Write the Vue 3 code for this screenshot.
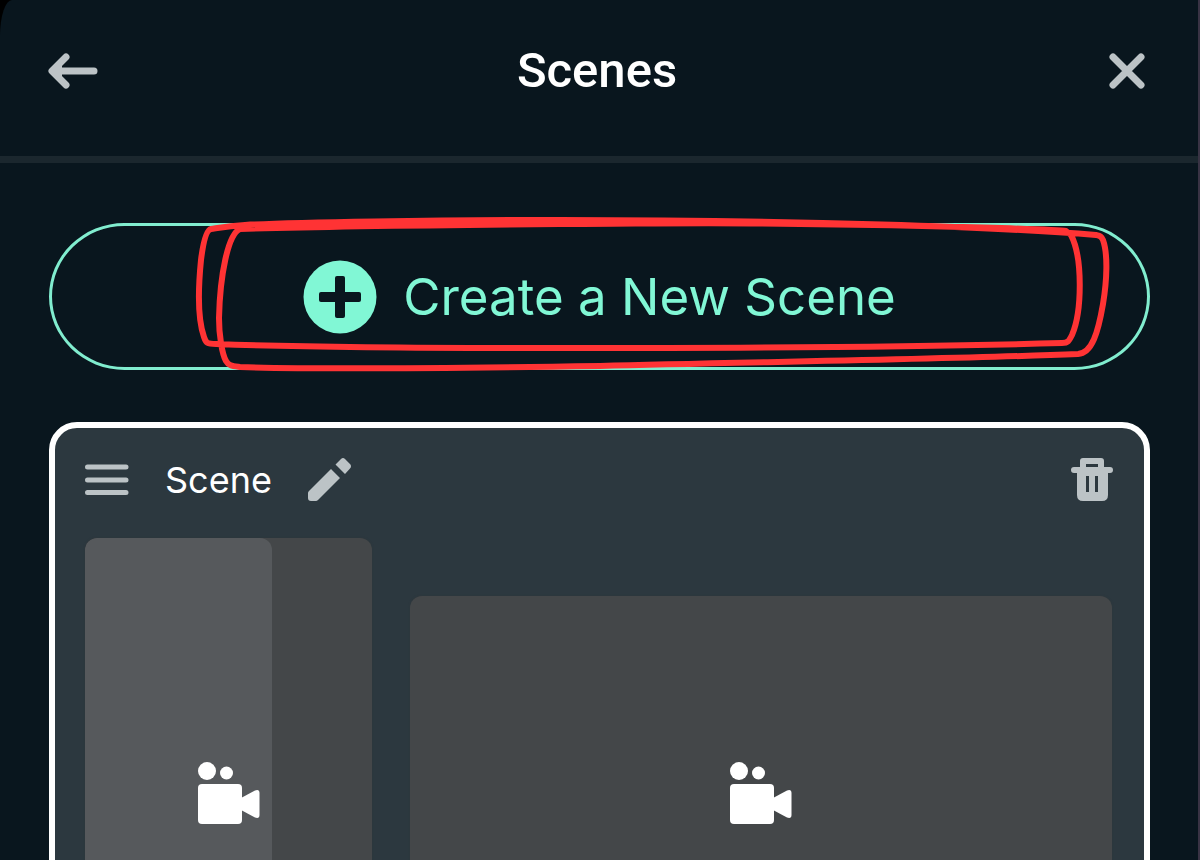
<script setup>
import { ref } from "vue";

const sceneName = ref("Scene");

// one preview per output orientation
const previews = [
  { id: "portrait", selected: true },
  { id: "landscape", selected: false },
];
</script>

<template>
  <div class="screen">
    <header class="top-bar">
      <button class="icon-button" type="button" aria-label="Back">
        <svg width="50" height="38" viewBox="0 0 50 38">
          <path d="M18 5 L4 19 L18 33 M6 19 H46" />
          <path d="M4 19 L14 9 V29 Z" class="solid" />
        </svg>
      </button>
      <h1>Scenes</h1>
      <button class="icon-button close" type="button" aria-label="Close">
        <svg width="38" height="38" viewBox="0 0 38 38">
          <path d="M5 5 L33 33 M33 5 L5 33" />
        </svg>
      </button>
    </header>

    <main class="content">
      <div class="create-wrap">
        <button class="create" type="button">
          <svg width="74" height="74" viewBox="0 0 74 74" aria-hidden="true">
            <circle cx="37" cy="37" r="36.500" fill="#81f7d5" />
            <rect x="16" y="32" width="42" height="10" rx="2" fill="#09161e" />
            <rect x="32" y="16" width="10" height="42" rx="2" fill="#09161e" />
          </svg>
          <span>Create a New Scene</span>
        </button>
        <!-- hand drawn marker around the button -->
        <svg class="marker" viewBox="49 223 1101 147" preserveAspectRatio="none" aria-hidden="true">
          <path
            d="M1066 231 C1060 230 940 225 800 224 C700 222 640 224 560 224 C440 225 300 227 240 229
               C228 234 220 275 219 318 C219 335 222 354 226 361 C229 366 232 366 240 367
               C330 370 470 368 600 366 C760 362 960 359 1078 354 C1092 353 1098 333 1103 304
               C1107 280 1108 254 1103 240 C1101 236 1100 236 1096 235
               C1000 227 800 220 560 220 C440 220 290 222 245 225 C228 226 218 228 211 229
               C206 230 203 244 201 260 C198 290 198 320 204 337 C206 343 207 344 216 344
               C300 347 430 348 560 348 C760 348 960 346 1062 343
               C1068 343 1069 341 1072 335 C1082 312 1083 258 1071 235 Z"
          />
        </svg>
      </div>

      <section class="scene-card">
        <div class="scene-head">
          <button class="icon-button" type="button" aria-label="Reorder">
            <svg width="44" height="44" viewBox="0 0 44 44">
              <path d="M2.500 9 H41 M2.500 22 H41 M2.500 34.500 H41" class="thin" />
            </svg>
          </button>
          <h2>{{ sceneName }}</h2>
          <button class="icon-button" type="button" aria-label="Rename scene">
            <svg width="44" height="44" viewBox="0 0 44 44">
              <path
                class="solid"
                d="M23 11 L32 20 L10 42 Q9 43 8 43 H3 Q0 43 0 40 V35 Q0 34 1 33 Z
                   M27.500 6.500 L33 1 Q35 -1 37 1 L42 6 Q44 8 42 10.500 L37 16 Z"
              />
            </svg>
          </button>
          <button class="icon-button remove" type="button" aria-label="Delete scene">
            <svg width="44" height="44" viewBox="0 0 44 44">
              <path
                class="solid"
                fill-rule="evenodd"
                d="M13 0 H31 Q34 0 34 3 V9 H40 Q43 9 43 12 Q43 15 40 15 H38 V37 Q38 43 32 43 H13
                   Q7 43 7 37 V15 H4 Q1 15 1 12 Q1 9 4 9 H10 V3 Q10 0 13 0 Z
                   M16 6 V9 H28 V6 Z M16 18 V34 H19 V18 Z M25 18 V34 H28 V18 Z"
              />
            </svg>
          </button>
        </div>

        <div class="previews">
          <div
            v-for="preview in previews"
            :key="preview.id"
            class="preview"
            :class="[preview.id, { selected: preview.selected }]"
          >
            <svg width="62" height="62" viewBox="0 0 62 62" aria-hidden="true">
              <g fill="#fff">
                <circle cx="9" cy="9" r="9" />
                <circle cx="28.500" cy="11" r="6.500" />
                <rect y="22" width="44" height="40" rx="4" />
                <path d="M43 36 L57 28.500 Q61.500 27 61.500 31 V53 Q61.500 57 57 55.500 L43 48 Z" />
              </g>
            </svg>
          </div>
        </div>
      </section>
    </main>
  </div>
</template>

<style>
body {
  margin: 0;
  background: #000;
}
</style>

<style scoped>
.screen {
  display: flex;
  flex-direction: column;
  box-sizing: border-box;
  height: 100vh;
  overflow: hidden;
  background: #09161e;
  border-right: 2px solid #393344;
  border-top-left-radius: 12px 36px;
  font-family: Inter, "Liberation Sans", sans-serif;
}

h1,
h2 {
  margin: 0;
}

.top-bar {
  display: grid;
  grid-template-columns: 1fr auto 1fr;
  flex-shrink: 0;
  align-items: center;
  box-sizing: border-box;
  height: 163px;
  padding: 0 52px 14px 48px;
  border-bottom: 7px solid #1b272e;
}

.top-bar h1 {
  color: #fff;
  font-family: Roboto, sans-serif;
  font-size: 49px;
  font-weight: 500;
  line-height: 56px;
}

.icon-button {
  display: flex;
  padding: 0;
  border: 0;
  background: none;
  cursor: pointer;
}

.close {
  justify-self: end;
}

.icon-button path {
  fill: none;
  stroke: #bcc3c6;
  stroke-width: 7;
  stroke-linecap: round;
  stroke-linejoin: round;
}

.icon-button .thin {
  stroke-width: 5;
}

.icon-button .solid {
  fill: #bcc3c6;
  stroke: none;
}

.content {
  padding: 60px 48px 0 49px;
}

.create-wrap {
  position: relative;
  margin-bottom: 52px;
}

.create {
  display: flex;
  align-items: center;
  justify-content: center;
  gap: 26px;
  box-sizing: border-box;
  width: 100%;
  height: 147px;
  padding: 0;
  border: 3px solid #81edcf;
  border-radius: 76px / 74px;
  background: transparent;
  color: #81f7d5;
  font-family: inherit;
  font-size: 51px;
  cursor: pointer;
}

.marker {
  position: absolute;
  inset: 0;
  width: 100%;
  height: 100%;
  overflow: visible;
  pointer-events: none;
}

.marker path {
  fill: none;
  stroke: #ff3334;
  stroke-width: 6;
  stroke-linejoin: round;
}

.scene-card {
  padding: 30px;
  border: 6px solid #fff;
  border-radius: 28px;
  background: #2c383f;
}

.scene-head {
  display: flex;
  align-items: center;
  height: 44px;
  margin-bottom: 36px;
}

.scene-head h2 {
  margin: 0 36px;
  color: #fff;
  font-size: 36px;
  font-weight: 400;
  line-height: 44px;
}

.remove {
  margin-left: auto;
}

.previews {
  display: grid;
  grid-template-columns: 287fr 702fr;
  align-items: center;
  gap: 38px;
  padding-right: 2px;
}

.preview {
  display: flex;
  align-items: center;
  justify-content: center;
  position: relative;
  overflow: hidden;
  border-radius: 12px;
  background: #444749;
  box-shadow: 0 0 2px #30373b;
}

.preview svg {
  position: relative;
}

.portrait {
  aspect-ratio: 9 / 16;
}

.landscape {
  aspect-ratio: 16 / 9;
}

.selected::before {
  content: "";
  position: absolute;
  inset: 0 35% 0 0;
  border-radius: 12px;
  background: #56595c;
}
</style>
